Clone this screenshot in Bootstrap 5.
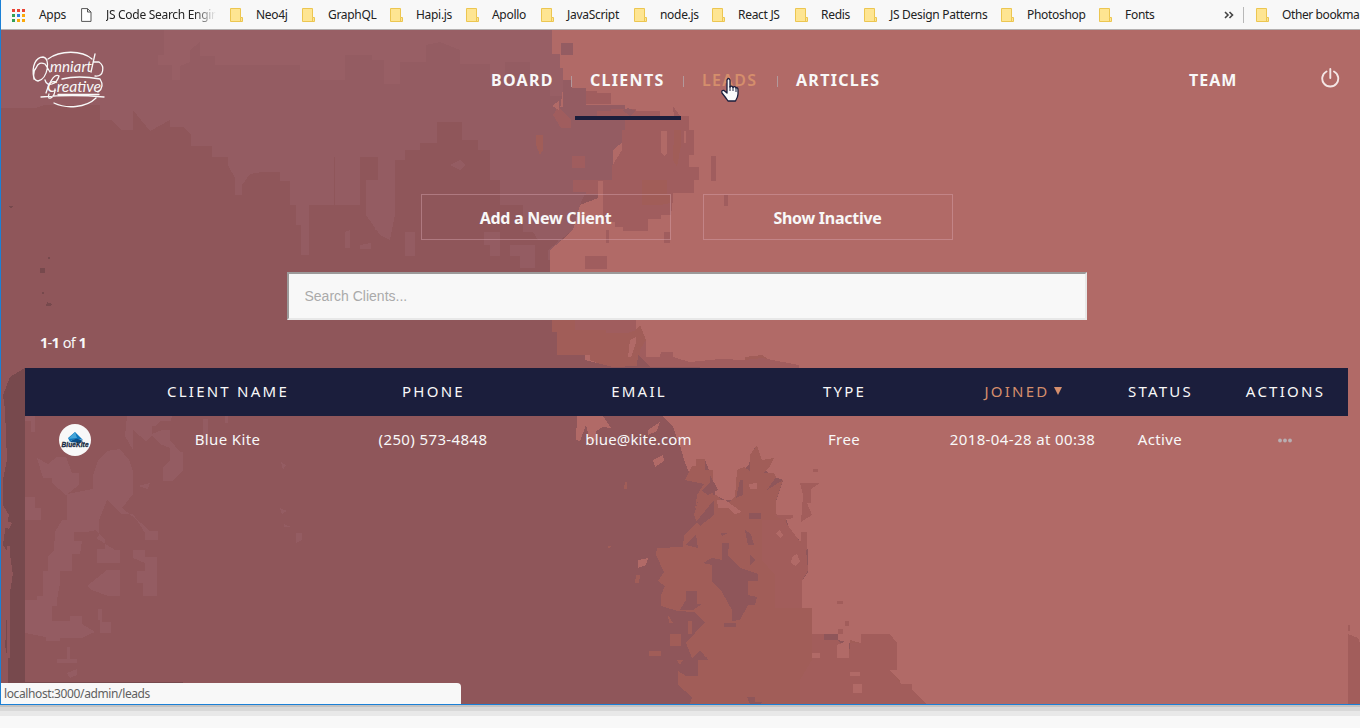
<!DOCTYPE html>
<html lang="en">
<head>
<meta charset="utf-8">
<title>Clients</title>
<link rel="stylesheet" href="https://cdn.jsdelivr.net/npm/bootstrap@5.3.0/dist/css/bootstrap.min.css">
<style>
body{font-family:"Noto Sans","Open Sans",sans-serif;background:#f8f8f8;color:#f8f8f8;height:728px;overflow:hidden;font-size:15px;line-height:1.2}
.browser{height:705px;border-left:1px solid #1b80d6;border-bottom:1px solid #1b80d6;box-shadow:0 2px #c3c3c3,0 6px #d8d8d8,0 11px #e8e8e8}
.bookmarks{height:30px;background:#f8f8f8;border-bottom:1px solid #b4b0b0;color:#222;font-size:12px;letter-spacing:-.3px;padding-left:10px;display:grid;grid-template-columns:70px 149px 72px 88px 76px 75px 93px 78px 83px 69px 137px 98px 125px 19px 13px 93px;align-items:center;white-space:nowrap;flex:none}
.bookmarks>div{display:flex;align-items:center;padding-top:1px}
.bookmarks svg{flex:none;width:14px;margin-right:12px}
.bookmarks span{padding-top:1px}
.fade-end{width:110px;overflow:hidden;margin-left:-1px;-webkit-mask-image:linear-gradient(90deg,#000 80%,transparent);mask-image:linear-gradient(90deg,#000 80%,transparent)}
.split{height:16px;width:1px;background:#b8b8b8}
.scene{left:0;top:0;width:1359px;height:674px}
.page{background:#8f565a}
.topbar{height:90px;display:grid;grid-template-columns:475px 410px 303px 132px 29px}
.topbar a{color:#f8f8f8;text-decoration:none;font-weight:700;font-size:16px;letter-spacing:1.3px}
.topbar .team{padding-top:41px;letter-spacing:1px}
.menu{display:grid;grid-template-columns:99px 106px 6px 94px 105px}
.menu a{padding:41px 0 0 15px;position:relative}
.menu a+a::before,.menu i+a::before{content:"";position:absolute;left:-4px;top:46px;width:1px;height:11px;background:#b3999c}
.menu .current{border-bottom:4px solid #1b1e3c}
.menu .hot{color:#d58e6c;font-weight:600}
.body-area{margin-left:12px}
.choice{width:250px;height:46px;border:1px solid rgba(220,170,180,.42)!important;border-radius:0;color:#f8f8f8!important;font-weight:700;font-size:16px;letter-spacing:-.27px;padding:1px 0 0}
.finder{width:800px;height:48px;border:2px solid;border-color:#9c9a9a #e8e8e8 #e8e8e8 #9c9a9a;border-radius:0;background:#f8f8f8!important;font:14px "Liberation Sans",sans-serif;padding:0 16px;margin-top:32px}
.finder::placeholder{color:#aaa}
.tally{height:48px;padding:0 0 2px 27px;font-size:14.5px;letter-spacing:-.75px;word-spacing:.6px}
.line{display:grid;grid-template-columns:100px 205px 206px 205px 206px 151px 124px 126px;height:48px;align-items:center;text-align:center;width:1323px;margin-left:12px;padding-bottom:2px}
.heads{background:#1b1e3c;letter-spacing:2.25px}
.heads span{padding-left:1px}
.sorted{color:#d58e6c}
.cells{letter-spacing:.38px}
.cells .mail{letter-spacing:.15px}
.cells svg{position:relative;top:1px}
.status{left:0;bottom:0;width:460px;height:21px;background:#f8f8f8;color:#606060;font-size:12px;letter-spacing:-.38px;border-top-right-radius:4px;padding:4px 3px 0}
.pointer{left:719px;top:47px}
</style>
</head>
<body>
<svg class="d-none"><symbol id="folder" viewBox="0 0 14 14"><path d="M.5.5H10.5V9.5H12.5V13.5H.5Z" fill="#fee592" stroke="#ecc651"/><path d="M10.5 9.5V13.5" stroke="#ecc651"/></symbol></svg>
<div class="browser d-flex flex-column">
  <div class="bookmarks">
    <div><svg height="14" viewBox="-1 0 14 14" shape-rendering="crispEdges"><path fill="#ea4335" d="M0 1h3v3H0zM5 1h3v3H5zM10 1h3v3h-3z"/><path fill="#34a055" d="M0 6h3v3H0zM0 11h3v3H0z"/><path fill="#2a7de1" d="M5 6h3v3H5z"/><path fill="#fba90a" d="M10 6h3v3h-3zM10 11h3v3h-3zM5 11h3v3H5z"/></svg><span style="margin-left:2px">Apps</span></div>
    <div><svg height="14" viewBox="0 0 14 14" fill="#fff" stroke="#555"><path d="M.6.6H6.5L10 4V13.4H.6ZM6.5.6V4H10"/></svg><span class="fade-end">JS Code Search Engin</span></div>
    <div><svg height="14"><use href="#folder"/></svg><span>Neo4j</span></div>
    <div><svg height="14"><use href="#folder"/></svg><span>GraphQL</span></div>
    <div><svg height="14"><use href="#folder"/></svg><span>Hapi.js</span></div>
    <div><svg height="14"><use href="#folder"/></svg><span>Apollo</span></div>
    <div><svg height="14"><use href="#folder"/></svg><span>JavaScript</span></div>
    <div><svg height="14"><use href="#folder"/></svg><span>node.js</span></div>
    <div><svg height="14"><use href="#folder"/></svg><span>React JS</span></div>
    <div><svg height="14"><use href="#folder"/></svg><span>Redis</span></div>
    <div><svg height="14"><use href="#folder"/></svg><span>JS Design Patterns</span></div>
    <div><svg height="14"><use href="#folder"/></svg><span>Photoshop</span></div>
    <div><svg height="14"><use href="#folder"/></svg><span>Fonts</span></div>
    <div><svg height="14" viewBox="0 0 14 14" fill="none" stroke="#444" stroke-width="1.6"><path d="M1 4 4 7 1 10M5.500 4 8.500 7 5.500 10"/></svg></div>
    <div class="split"></div>
    <div><svg height="14"><use href="#folder"/></svg><span style="letter-spacing:-.4px">Other bookma</span></div>
  </div>
  <main class="page position-relative flex-grow-1 overflow-hidden">
    <svg class="scene position-absolute" viewBox="1 30 1359 674" shape-rendering="crispEdges">
      <path fill="#945c62" d="M0 29H552V54H560V68H563V88H586V105H625V135L621 150H613V160L611 185H580V205L572 232H560V260H540V255H530V235H510V215H500V180H490V150H478V140H462V122H437V143H420V150H405V160H395V178H390V210H384V230H375V205H366V180H378V157H334V205H309V255H301V225H296V205H290V181H280V172H262L250 174 242 185V195H235V178L228 165V157H212V146H191V135L184 127H170V120L150 131 133 110V130H121L112 120H100V105H45L35 108H0Z"/>
      <path fill="#985f65" d="M164 29H552V54H560V68H563V96H550V80H530V62H505V78H490V64H460V50L440 42 426 45V62H400V84H384V60H372V55H345V80H320V70H300V65H215V56H200V42L190 50V62L180 66V80H172V65H158V55H164Z"/>
      <path fill="#945c62" d="M335 157H360V205H335ZM384 185 395 160V215L390 240 380 235 366 215V202H378ZM405 232H415V256H405ZM360 245 371 243V249H360ZM450 165 460 160 466 165 460 170ZM484 232H510V245H504V256H490V245H484ZM511 205H522V232H511ZM345 232 350 230V248H345Z"/>
      <path fill="#b16a67" d="M552 29H1360V704H927L912 690V684H900L890 670H896V650L890 634H861V643H850L838 640V634H812V608H802L796 590 808 572V550L790 530 785 515H775V505L783 480 770 475 760 465 755 447 748 466 738 475V500H725L715 495 713 480 705 460 700 462 690 475 684 460 680 445 672 426 662 416H640V367H563L552 320V272H550V250L562 240 572 230 580 205 598 198V140L560 110 563 88V68H560V54H552Z"/>
      <path fill="#945c62" d="M561 43H573V55H561ZM563 80H572V88H586V105H625V140L613 150V178H595L580 195H563ZM558 107H600V182H586V195H558Z"/>
      <path fill="#8f565a" d="M500 205H523V232H558V242L548 250V272H500Z"/>
      <path fill="#945c62" d="M523 193H585L580 205 573 230 560 240H538L523 215ZM510 245H535V268H520V256H510Z"/>
      <path fill="#a05d5e" d="M586 91H597V93H611V104H586ZM597 111H611V109H636V111H660V117H674L673 106 680 116H689V130H694V155H689V167H699V180H694V193H673V199L671 215H661V219H648V231H623V227H615V222H603V181H598V194H586V192H573V180H612V166L622 150V130H592V117H597ZM558 107 571 120V128H561L553 115ZM585 256H607V269H585ZM606 230H609V243H606ZM711 156H716V181H711ZM724 195H728V206H724ZM572 156H585V168H572ZM664 232H670V243H664Z"/>
      <path fill="#945c62" d="M592 118H625V130H622L618 142 612 150V180H600V140H592ZM622 110 628 108 636 111 630 116Z"/>
      <path fill="#b16a67" d="M661 131H667V153L664 156 661 152ZM684 131H686V143H684ZM598 181H603V210L598 205ZM552 106 559 101V110Z"/>
      <path fill="#a15d58" d="M642 180H667V194H671V203L660 205H642ZM536 135H543V150L540 155 536 145ZM674 130H681V145L677 167 673 160ZM552 320H636V330L640 325 646 340V357H660L661 352H673V357L690 362 720 359 745 360V357L762 355 776 364 799 366V368H610L590 360V355H557V332H552Z"/>
      <path fill="#a05d5e" d="M575 320H636V330L628 333H606V330H575ZM646 340V357H660L661 352H673V357L690 362 720 359 745 360 762 358 799 365V368H640V350Z"/>
      <path fill="#8f565a" d="M552 332H557V355H585V360L613 367 637 366 638 354 650 367H700V368H552ZM560 416H660L673 426 680 448 683 470 692 480V704H560Z"/>
      <path fill="#b16a67" d="M577 416H603L611 428 603 427 596 431V440L590 442 586 425 580 441 576 440ZM648 430 660 422 657 431 648 435ZM653 460 663 455 664 461 655 467ZM638 560 648 558 646 565 638 568ZM630 340 636 337V343L631 357H628Z"/>
      <path fill="#a15d58" d="M685 480 692 466H696V459H705V470H713V495H717L726 505 735 497 737 470 744 467 750 471V455L757 445 762 460 774 458 769 468 763 473H774L776 477 767 490 783 480 776 500V514L786 518V530L805 545 808 570 802 581V596H796L799 608H812V634H824V640H838V643L850 649V640L861 643V634H890L896 643V658L889 670 900 680V684H912V701L927 704H690L692 697 678 685V671L686 676H698V660H708L700 650 692 658 686 643 695 633 705 622 694 612 678 611 661 606V595L665 586 658 581 664 572 656 555 657 548 683 547 684 535 697 522 694 515 698 501 695 510 697 495 704 484Z"/>
      <path fill="#a25d5b" d="M800 483H820L811 489V503H807L812 515 801 522 803 495ZM801 532H807V550H801ZM774 515H793V518L783 520ZM813 469H818V472H813ZM837 601H843V604H837ZM845 621H849V626H845ZM812 608V634H824V640H838L850 655V643L861 643V634H890L897 643V670H890L901 684H912V690L927 704H800V680L812 660ZM838 629H843V634H838ZM762 520 784 520 806 550 808 570 802 581V608H775V575L762 560ZM1348 634 1358 638 1360 643V704H1348ZM1348 625H1350V631H1348Z"/>
      <path fill="#8f565a" d="M710 482V475L718 490 708 495 702 491ZM714 500V515L700 526 696 522ZM740 480H743V495L736 498ZM749 513H761V519H749ZM745 530 751 534 754 545H748ZM703 563 712 558 722 560V543H729L728 556 740 568 758 574V581H748V595L757 597 755 605H748L740 620 732 621V610L722 592 712 582V565ZM686 591H697V604H702L693 610H680L686 600ZM750 555 755 560 750 566ZM721 533H728L722 536ZM724 623H736V627H724ZM696 654 709 658H698ZM747 697H755V702H763L760 704H750ZM696 534 698 548 686 545Z"/>
      <path fill="#a15d58" d="M670 634H681V646H670ZM649 651H661V656H649ZM688 621H692V634H688ZM668 615 673 623 669 623ZM677 660H683L680 665ZM636 575H640L639 583H635ZM625 482H627V489H624ZM608 546H611L609 549Z"/>
      <path fill="#b16a67" d="M717 500H725L742 512 735 514 728 508H718ZM776 533 780 530 783 535 780 538ZM792 557 797 554 800 561 796 566 791 563ZM749 484 757 483V489H750ZM850 672H860V676H850ZM853 684H862V693H853ZM812 653H820V658H812ZM837 645 849 640V658H837Z"/>
      <path fill="#945c62" d="M127 416H172L171 421H160L156 426H152V434L162 430H170V440L180 452H183V470L173 481H163V467L170 461V448L160 444 152 436 146 441 133 430V450L125 436ZM25 416H35V432H31V421H25ZM37 458 48 464 57 457H66L72 473H79V485L66 495 52 483V478H43ZM93 475 98 461 107 451 120 449 129 460 133 471V494L122 508 141 523 150 531H158V540H145V533L133 514H122L107 500 99 520V535L96 538 104 543 115 550H120V563H97V549H105V540L96 530 86 532H74V541H82L80 554H72V571H60V583L57 600V606H52V621H70V616H82V624L95 632 90 634 82 638H60V641H46V637L25 633V600H37V596H43V571H48V557L54 550 55 532 62 520H67V494L93 489ZM25 497H35V508H41V520H25ZM203 419H208V435L203 448ZM138 486 150 483 148 489ZM133 550H145V557H157V596H143V583H137V571H145V563L133 558ZM87 586 107 570H120V596H108L92 590ZM98 609H102V622H111V633H100V620H98ZM67 647H70V659H77V663H57V659H67ZM67 673 77 669V675L70 678ZM225 416H228V423H225ZM280 508 287 511 282 514ZM296 533H302V540L296 543ZM284 524 291 527H284ZM281 462 286 465 283 470Z"/>
      <path fill="#77494d" d="M25 368H27L25 370V704H8V660L5 645 3 625 10 615V582L13 575 10 555 3 545 5 530 9 515 3 505V480L7 460 5 410 3 395 10 377ZM40 268H45V273H40ZM47 302 52 304 50 306H46ZM48 257H50V259H48ZM42 292H44V294H42ZM8 206H13L11 209ZM15 683V682H183V683Z"/>
      <path fill="#8f565a" d="M3 520 12 523 9 529 4 526ZM7 546H10V567L12 580 9 598 10 620V658H7ZM3 600H6V640H3Z"/>
    </svg>
    <div class="position-relative">
      <header class="topbar">
        <svg class="ms-4 mt-3" width="90" height="68" viewBox="25 46 90 68" fill="none" stroke="#f8f8f8" stroke-width="1.3" stroke-linecap="round">
          <path d="M48 59C60 50 82 50 92 59M54 103C66 109 86 108 96 98M41 97Q72 94 104 97M58 94.500H99M34 79C31 66 36 57 43 57 51 58 48 79 38 81 32 80 33 71 36 68 38 63 41 62 45 64L50 72M95 54 91 72M94 62H99C105 66 104 77 95 76M62 79Q78 75 100 79 105 87 98 92M45 80C47 88 57 84 59 76 54 72 48 86 46 93M55 89C55 99 46 101 49 94"/>
          <g fill="#f8f8f8" stroke="none" font-family="Lato" font-style="italic" font-size="16"><text x="50" y="72" textLength="42" lengthAdjust="spacingAndGlyphs">mniart</text><text x="47" y="92" font-size="15" textLength="54" lengthAdjust="spacingAndGlyphs">Creative</text></g>
        </svg>
        <nav class="menu"><a href="#">BOARD</a><a href="#" class="current">CLIENTS</a><i></i><a href="#" class="hot">LEADS</a><a href="#">ARTICLES</a></nav>
        <i></i>
        <a href="#" class="team">TEAM</a>
        <svg width="20" height="22" viewBox="0 0 20 22" fill="none" stroke="#f4e6e5" stroke-width="1.9" style="margin-top:37px" stroke-linecap="round"><path d="M5.500 4.500a8 8 0 1 0 7.500 0M9.300 2V11"/></svg>
      </header>
      <div class="body-area">
        <div class="d-flex justify-content-center" style="gap:32px;padding-top:74px"><button class="btn choice">Add a New Client</button><button class="btn choice">Show Inactive</button></div>
        <input class="finder form-control mx-auto" placeholder="Search Clients...">
        <div class="tally d-flex align-items-center"><span><b>1</b>-<b>1</b> of <b>1</b></span></div>
        <div class="line heads"><span></span><span>CLIENT NAME</span><span>PHONE</span><span>EMAIL</span><span>TYPE</span><span class="sorted">JOINED <svg width="8" height="8" viewBox="0 0 8 8" style="margin:-3px 0 0 -2px" fill="#d58e6c"><path d="M0 0H8L4 8Z"/></svg></span><span>STATUS</span><span>ACTIONS</span></div>
        <div class="line cells">
          <span><svg width="32" height="32" viewBox="0 0 32 32"><circle cx="16" cy="16" r="16" fill="#f8f8f8"/><path fill="#0d77bd" d="M16 8 24 16Q15 13 11 18L9 14Z"/><path fill="#45a5d8" d="M16 8 18 14 9 15Z"/><path fill="#0a4f8a" d="M11 18Q16 12 24 17L20 19Z"/><text x="2.500" y="23" font-family="Liberation Sans" font-weight="700" font-style="italic" font-size="6.500" fill="#15293f" stroke="#15293f" stroke-width=".3" letter-spacing="0" textLength="27">BlueKite</text></svg></span>
          <span>Blue Kite</span><span>(250) 573-4848</span><span class="mail">blue@kite.com</span><span>Free</span><span>2018-04-28 at 00:38</span><span>Active</span>
          <span><svg width="14" height="5" viewBox="0 0 14 5" style="margin-top:-3px" fill="#b9aeb2"><circle cx="2" cy="2.500" r="1.900"/><circle cx="7" cy="2.500" r="1.900"/><circle cx="12" cy="2.500" r="1.900"/></svg></span>
        </div>
      </div>
    </div>
    <svg class="pointer position-absolute" width="20" height="26" viewBox="0 0 20 26"><path d="M7 3Q8.500 0 10 3V10Q12 8 13 10.500 15 8.500 16 11 18 10 18 13V17Q18 20 15.500 24H8Q6 21 2 16 1 13 4 13.500L7 16Z" fill="#fafafa" stroke="#1b1e3c" stroke-width="1.300" stroke-linejoin="round"/><path d="M10 9V14M13 10V14M16 11V15" stroke="#1b1e3c"/></svg>
    <div class="status position-absolute">localhost:3000/admin/leads</div>
  </main>
</div>
<script src="https://cdn.jsdelivr.net/npm/bootstrap@5.3.0/dist/js/bootstrap.bundle.min.js"></script>
</body>
</html>
